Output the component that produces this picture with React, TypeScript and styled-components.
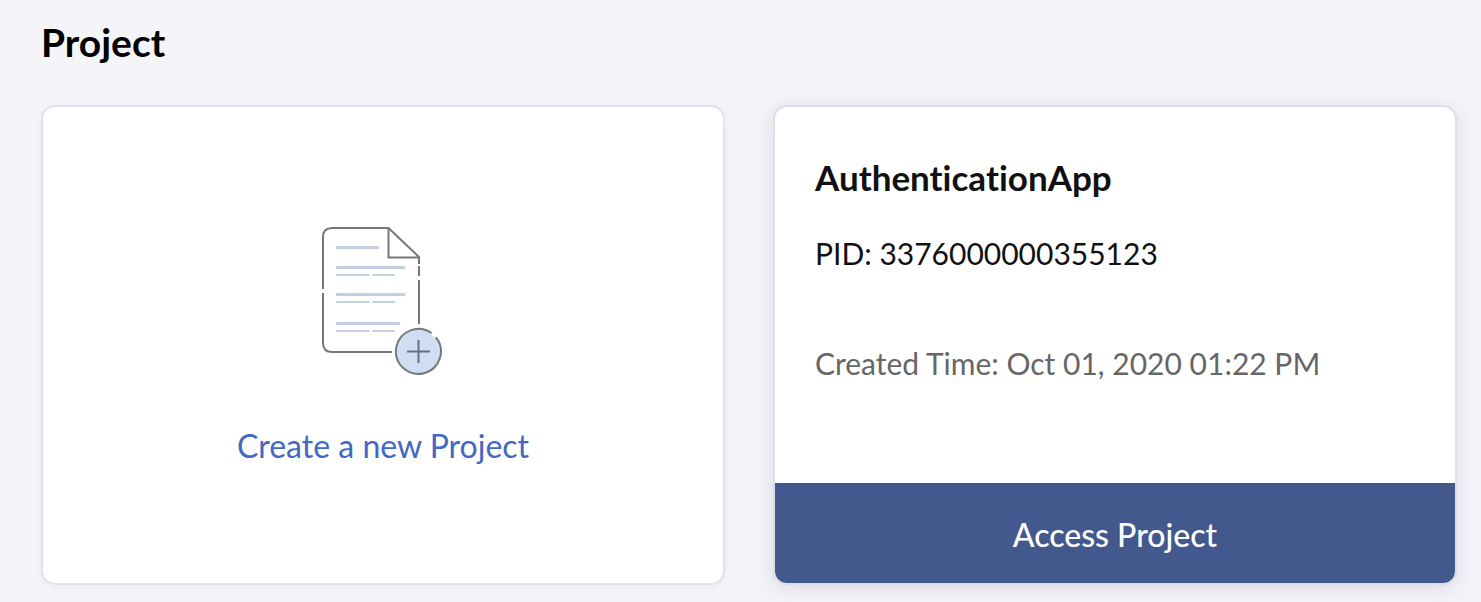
import React from "react";
import styled, { createGlobalStyle } from "styled-components";

const GlobalStyle = createGlobalStyle`
  *, *::before, *::after { box-sizing: border-box; }
  body {
    margin: 0;
    background: #f4f4f9;
    color: #111;
    font-family: Lato, "Open Sans", sans-serif;
    font-variant-ligatures: none;
  }
`;

const Page = styled.main`
  padding: 18px 24px 16px 41px;
`;

const PageTitle = styled.h1`
  margin: 0 0 39px;
  color: #000;
  font-size: 39px;
  line-height: 48px;
  font-weight: 700;
`;

const CardGrid = styled.section`
  display: grid;
  grid-template-columns: repeat(2, minmax(0, 1fr));
  gap: 48px;
`;

const Card = styled.article<{ $raised?: boolean }>`
  display: flex;
  flex-direction: column;
  min-height: 480px;
  overflow: hidden;
  border: 2px solid ${(p) => (p.$raised ? "#dedde8" : "#e3e2ea")};
  border-radius: 14px;
  background: #fff;
  background-clip: padding-box;
  box-shadow: ${(p) =>
    p.$raised
      ? "0 4px 22px rgba(50, 45, 90, 0.12)"
      : "0 2px 10px rgba(50, 45, 90, 0.04)"};
`;

const CreateButton = styled.button`
  display: flex;
  flex: 1;
  flex-direction: column;
  align-items: center;
  justify-content: center;
  gap: 50px;
  padding: 2px 0 0;
  border: 0;
  background: transparent;
  color: #4268c4;
  font: inherit;
  font-size: 32px;
  line-height: 40px;
  cursor: pointer;
`;

const CardBody = styled.div`
  flex: 1;
  padding: 46px 40px 40px;
`;

const ProjectName = styled.h2`
  margin: 0;
  font-size: 35px;
  line-height: 48px;
  font-weight: 700;
`;

const Detail = styled.p<{ $muted?: boolean }>`
  margin: ${(p) => (p.$muted ? "70px" : "32px")} 0 0;
  color: ${(p) => (p.$muted ? "#666" : "#111")};
  font-size: 30px;
  line-height: 40px;
`;

const AccessButton = styled.button`
  min-height: 100px;
  padding: 4px 0 0;
  border: 0;
  background: #43598d;
  color: #fff;
  font: inherit;
  font-size: 32px;
  line-height: 40px;
  font-weight: 500;
  cursor: pointer;
`;

const DocumentIcon = () => (
  <svg width="124" height="150" viewBox="0 0 124 150" fill="none" aria-hidden="true">
    <g stroke="#747679" strokeWidth="2" strokeLinejoin="round">
      <path d="M2 63V11Q2 2 11 2H67.500L98 31V38" />
      <path d="M67.500 2V31.500H98" />
      <path d="M98 40V50M98 54V98" />
      <path d="M2 67V117Q2 126 11 126H71" />
    </g>
    <g stroke="#c5cfe2" strokeWidth="3" strokeLinecap="round">
      <path d="M16 21.500H57M16 41.500H83M16 68.500H83M16 97.500H78" />
      <path strokeWidth="2" d="M16 49H48M52 49H73M16 76H48M52 76H73M16 105H48M52 105H73" />
    </g>
    <circle cx="97.500" cy="125.500" r="22.500" fill="#cfdef2" />
    <path
      d="M111 107.500A22.500 22.500 0 1 0 114.500 110.800"
      stroke="#74797f"
      strokeWidth="2"
    />
    <path d="M110 108L113 105L117 109L114 112Z" fill="#fff" />
    <path d="M97.500 114V137M86 125.500H109" stroke="#646f89" strokeWidth="2" />
  </svg>
);

export default function App() {
  return (
    <>
      <GlobalStyle />
      <Page>
        <PageTitle>Project</PageTitle>
        <CardGrid aria-label="Projects">
          <Card>
            <CreateButton type="button">
              <DocumentIcon />
              <span>Create a new Project</span>
            </CreateButton>
          </Card>
          <Card $raised>
            <CardBody>
              <ProjectName>AuthenticationApp</ProjectName>
              <Detail>PID: 3376000000355123</Detail>
              <Detail $muted>Created Time: Oct 01, 2020 01:22 PM</Detail>
            </CardBody>
            <AccessButton type="button">Access Project</AccessButton>
          </Card>
        </CardGrid>
      </Page>
    </>
  );
}
